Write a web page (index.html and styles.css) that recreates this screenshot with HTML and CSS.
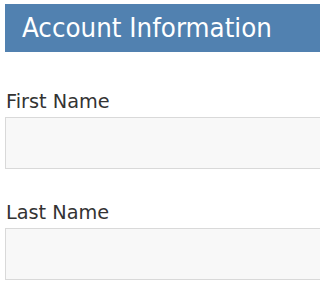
FILE: index.html
```html
<!DOCTYPE html>
<html>
<head>
<meta charset="utf-8">
<link rel="stylesheet" href="styles.css">
</head>
<body>
<div class="viewport">
  <div class="page">
    <h1 class="title">Account Information</h1>
    <div class="field">
      <label class="label" for="fn">First Name</label>
      <input class="input" id="fn" type="text">
    </div>
    <div class="field">
      <label class="label" for="ln">Last Name</label>
      <input class="input" id="ln" type="text">
    </div>
  </div>
</div>
</body>
</html>
```
FILE: styles.css
```css
html, body {
  margin: 0;
  padding: 0;
  background: #ffffff;
}
.viewport {
  width: 100%;
  height: 288px;
  overflow: hidden;
}
.page {
  width: 340px;
  padding: 4px 0 0 5px;
  font-family: "DejaVu Sans", sans-serif;
}
.title {
  margin: 0;
  height: 48px;
  line-height: 48px;
  padding-left: 17px;
  background: #5181b0;
  color: #ffffff;
  font-family: "DejaVu Sans Condensed", "DejaVu Sans", sans-serif;
  font-stretch: condensed;
  font-size: 27.4px;
  font-weight: normal;
}
.field {
  display: flex;
  flex-direction: column;
  margin-top: 38px;
}
.field + .field {
  margin-top: 32px;
}
.label {
  display: block;
  font-size: 19.3px;
  line-height: 24px;
  color: #333333;
  margin-left: 1px;
}
.input {
  display: block;
  box-sizing: border-box;
  margin: 3px 0 0 0;
  height: 52px;
  width: 100%;
  border: 1px solid #d9d9d9;
  background: #f8f8f8;
  outline: none;
  padding: 0 8px;
}
```
